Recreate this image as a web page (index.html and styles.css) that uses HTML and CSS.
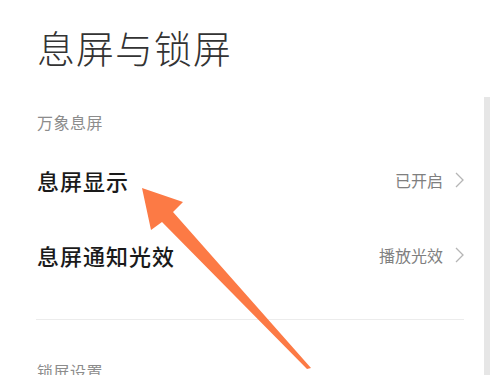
FILE: index.html
```html
<!DOCTYPE html>
<html lang="zh-CN">
<head>
<meta charset="utf-8">
<link rel="stylesheet" href="styles.css">
</head>
<body>
<div class="page">
  <main class="content">
    <h1 class="title">息屏与锁屏</h1>
    <div class="section-label">万象息屏</div>
    <div class="row">
      <span class="row-title">息屏显示</span>
      <span class="row-value">已开启<svg class="chev" viewBox="0 0 9 16" width="9" height="16"><path d="M1 1 L8 8 L1 15" fill="none" stroke="#b5b5b5" stroke-width="1.3"/></svg></span>
    </div>
    <div class="row">
      <span class="row-title">息屏通知光效</span>
      <span class="row-value">播放光效<svg class="chev" viewBox="0 0 9 16" width="9" height="16"><path d="M1 1 L8 8 L1 15" fill="none" stroke="#b5b5b5" stroke-width="1.3"/></svg></span>
    </div>
    <div class="divider"></div>
    <div class="section-label second">锁屏设置</div>
  </main>
  <div class="scrollbar"></div>
  <svg class="arrow" viewBox="0 0 500 375" width="500" height="375">
    <polygon fill="#fc7a45" points="142,188 183,202 173,212 311,368 307,369 162,222 151,230"/>
  </svg>
</div>
</body>
</html>
```

FILE: styles.css
```css
html, body {
  margin: 0;
  padding: 0;
  background: #ffffff;
}
body {
  font-family: "Noto Sans CJK SC", "Noto Sans", sans-serif;
  width: 500px;
  height: 375px;
  overflow: hidden;
}
.page {
  position: relative;
  display: flex;
  height: 375px;
}
.content {
  flex: 1;
  padding: 0 20px 0 37px;
}
.title {
  margin: 0;
  padding-top: 27px;
  font-size: 38px;
  line-height: 40px;
  font-weight: 300;
  color: #333333;
  letter-spacing: 1px;
}
.section-label {
  margin-top: 46px;
  font-size: 16px;
  line-height: 18px;
  color: #8c8c8c;
  letter-spacing: 0.5px;
}
.section-label.second {
  margin-top: 42px;
}
.row {
  height: 75px;
  display: flex;
  align-items: center;
  justify-content: space-between;
}
.row:first-of-type {
  margin-top: 0;
}
.section-label + .row {
  margin-top: 11px;
}
.row-title {
  font-size: 22px;
  font-weight: 500;
  color: #1a1a1a;
  letter-spacing: 1px;
}
.row-value {
  display: flex;
  align-items: center;
  gap: 12px;
  font-size: 16px;
  color: #7f7f7f;
}
.chev {
  display: block;
}
.divider {
  margin-top: 27px;
  height: 1px;
  background: #ececec;
  margin-left: -1px;
}
.scrollbar {
  width: 6px;
  margin-top: 97px;
  margin-right: 10px;
  background: #e6e6e6;
}
.arrow {
  position: absolute;
  left: 0;
  top: 0;
  pointer-events: none;
}
```
